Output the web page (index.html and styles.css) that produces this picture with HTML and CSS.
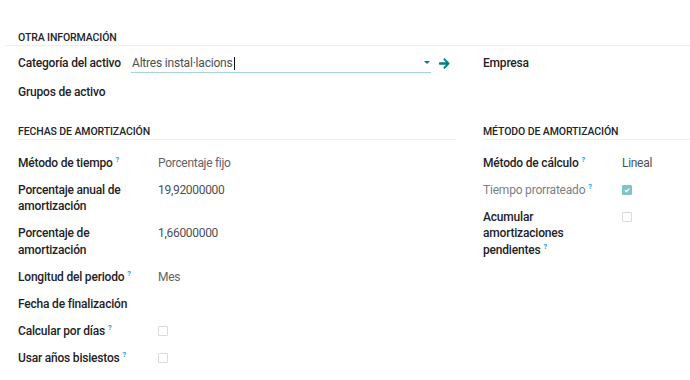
FILE: index.html
```html
<!DOCTYPE html>
<html lang="es">
<head>
<meta charset="utf-8">
<link rel="stylesheet" href="styles.css">
</head>
<body>
<div class="sheet">
  <div class="cut-row">
    <div class="cut-left">activo</div>
    <div class="cut-right">activo</div>
  </div>

  <div class="group-head full">OTRA INFORMACIÓN</div>
  <div class="two-col first">
    <div class="col">
      <div class="row">
        <div class="lbl lbl-auto">Categoría del activo</div>
        <div class="field">
          <div class="input">
            <span class="input-text">Altres instal·lacions</span><span class="cursor"></span>
            <span class="caret"></span>
          </div>
          <svg class="arrow" width="11" height="11" viewBox="0 0 448 448"><path fill="#017e84" d="M190 30l32-31 192 192c18 18 18 47 0 65L222 449l-32-32c-13-13-13-33 0-46l93-92H31C13 279 0 266 0 248v-48c0-18 13-31 31-31h252l-93-93c-13-13-13-33 0-46z"/></svg>
        </div>
      </div>
      <div class="row">
        <div class="lbl">Grupos de activo</div>
      </div>
    </div>
    <div class="col">
      <div class="row">
        <div class="lbl">Empresa</div>
      </div>
    </div>
  </div>

  <div class="two-col second">
    <div class="col">
      <div class="group-head">FECHAS DE AMORTIZACIÓN</div>
      <div class="rows">
        <div class="row"><div class="lbl w140">Método de tiempo<sup>?</sup></div><div class="val">Porcentaje fijo</div></div>
        <div class="row"><div class="lbl w140">Porcentaje anual de amortización</div><div class="val dark">19,92000000</div></div>
        <div class="row"><div class="lbl w140">Porcentaje de amortización</div><div class="val dark">1,66000000</div></div>
        <div class="row"><div class="lbl w140">Longitud del periodo<sup>?</sup></div><div class="val">Mes</div></div>
        <div class="row"><div class="lbl w140">Fecha de finalización</div></div>
        <div class="row"><div class="lbl w140">Calcular por días<sup>?</sup></div><div class="val"><span class="check"></span></div></div>
        <div class="row"><div class="lbl w140">Usar años bisiestos<sup>?</sup></div><div class="val"><span class="check"></span></div></div>
      </div>
    </div>
    <div class="col">
      <div class="group-head">MÉTODO DE AMORTIZACIÓN</div>
      <div class="rows">
        <div class="row"><div class="lbl w139">Método de cálculo<sup>?</sup></div><div class="val dark">Lineal</div></div>
        <div class="row"><div class="lbl w139 muted">Tiempo prorrateado<sup>?</sup></div><div class="val"><span class="check on"><svg width="10" height="10" viewBox="0 0 10 10"><path d="M3 5.2l1.5 1.4L7.2 3.6" fill="none" stroke="#fff" stroke-width="1.3"/></svg></span></div></div>
        <div class="row"><div class="lbl w139 narrow">Acumular amortizaciones pendientes<sup>?</sup></div><div class="val"><span class="check"></span></div></div>
      </div>
    </div>
  </div>
</div>
</body>
</html>
```

FILE: styles.css
```css
html, body {
  margin: 0;
  padding: 0;
  background: #fff;
}
body {
  font-family: Roboto, "Noto Sans", sans-serif;
  font-size: 12px;
  letter-spacing: -0.2px;
  color: #1f2328;
  overflow: hidden;
  width: 690px;
  height: 380px;
}
.sheet {
  display: flex;
  flex-direction: column;
}
.cut-row {
  display: flex;
  margin-top: -13px;
  height: 17px;
  line-height: 17px;
}
.cut-left { padding-left: 18px; width: 465px; }
.cut-right { color: #6c757d; }

.group-head {
  font-size: 10.5px;
  font-weight: 500;
  letter-spacing: -0.1px;
  color: #212529;
  line-height: 13px;
  padding-bottom: 1px;
  border-bottom: 1px solid #eceef1;
}
.group-head.full {
  margin-top: 27px;
  margin-left: 5px;
  padding-left: 13px;
}
.two-col {
  display: flex;
  padding-left: 18px;
  column-gap: 27px;
}
.two-col > .col:first-child { width: 438px; }
.two-col > .col:last-child { flex: 1; }
.two-col.first { padding-top: 9px; }
.two-col.second { margin-top: 14px; }

.rows { padding-top: 15px; }

.row {
  display: flex;
  align-items: flex-start;
  line-height: 16.5px;
  margin-bottom: 10.5px;
}
.lbl {
  font-weight: 500;
  color: #1f2328;
  flex: none;
}
.lbl-auto { width: 113px; }
.w140 { width: 140px; padding-right: 12px; box-sizing: border-box; }
.w139 { width: 139px; padding-right: 12px; box-sizing: border-box; }
.w139.narrow { padding-right: 30px; }
.lbl.muted { color: #7a7f85; font-weight: 400; }
sup {
  font-size: 7.5px;
  font-weight: 700;
  color: #2a9fd0;
  vertical-align: baseline;
  position: relative;
  top: -5px;
  margin-left: 3px;
  line-height: 0;
}
.val { color: #5f6368; letter-spacing: -0.3px; }
.val.dark { color: #495057; }

.field {
  flex: 1;
  display: flex;
  align-items: center;
}
.input {
  width: 299px;
  display: flex;
  align-items: center;
  border-bottom: 1px solid #a9d4d6;
  height: 18px;
  margin-top: -1px;
  color: #495057;
  position: relative;
  padding-left: 1px;
}
.cursor {
  display: inline-block;
  width: 1px;
  height: 13px;
  background: #111;
  margin-left: 1px;
}
.caret {
  position: absolute;
  right: 1px;
  top: 7px;
  width: 0;
  height: 0;
  border-left: 3px solid transparent;
  border-right: 3px solid transparent;
  border-top: 3px solid #017e84;
}
.arrow { margin-left: 8px; margin-top: -2px; }

.check {
  display: inline-block;
  width: 10px;
  height: 10px;
  border: 1px solid #d8dadd;
  border-radius: 1px;
  margin-top: 3px;
  vertical-align: top;
  box-sizing: border-box;
  position: relative;
}
.check.on {
  background: #7fc4c6;
  border-color: #7fc4c6;
}
.check.on svg { position: absolute; left: -1px; top: -1px; }
```
